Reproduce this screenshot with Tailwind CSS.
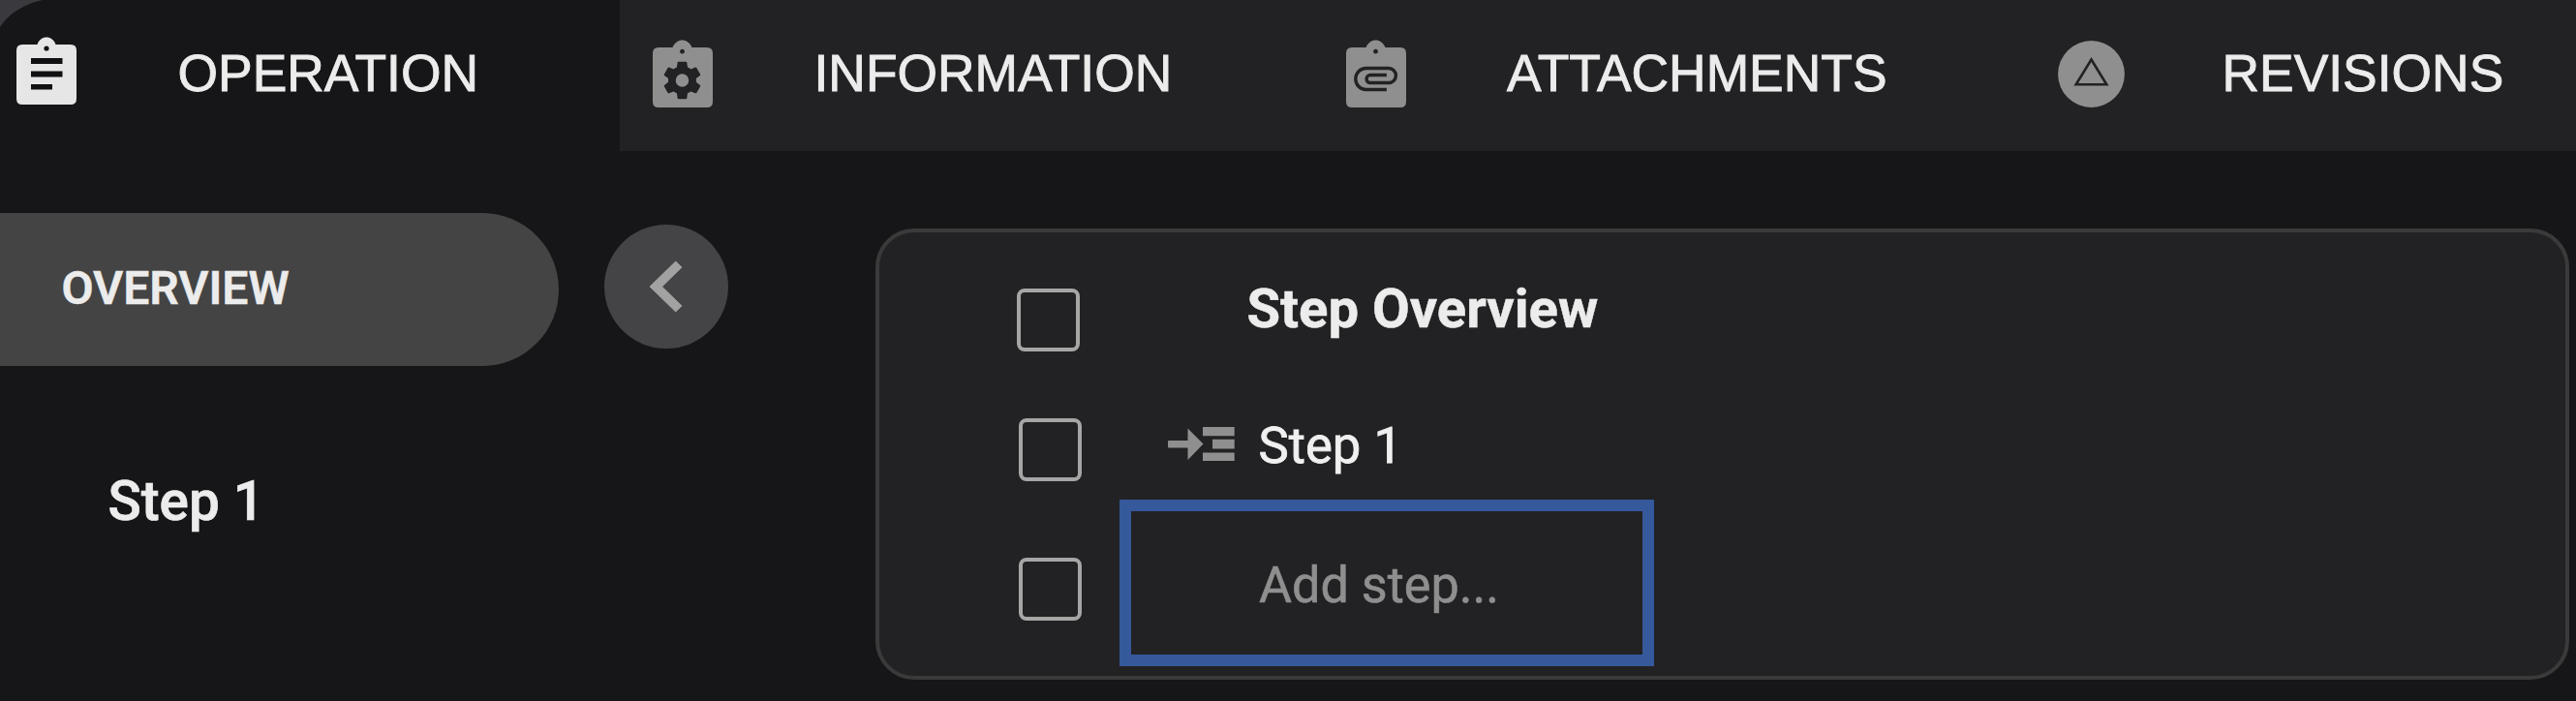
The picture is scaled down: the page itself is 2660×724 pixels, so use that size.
<!DOCTYPE html>
<html lang="en">
<head>
<meta charset="utf-8">
<title>Operation</title>
<script src="https://cdn.jsdelivr.net/npm/@tailwindcss/browser@4"></script>
</head>
<body class="bg-[#161618]">
<div class="relative flex h-[724px] w-[2660px] flex-col overflow-hidden bg-[#161618] font-[Roboto,sans-serif] text-[#ececec]">
  <!-- Rounded window corner -->
  <svg class="absolute left-0 top-0 h-7 w-[46px]" viewBox="0 0 46 28"><path d="M0 0H44C25 4 9 14 0 28Z" fill="#3a393e"/></svg>

  <nav class="flex h-[156px] shrink-0 font-['Liberation_Sans',Arial,sans-serif] text-[53.4px] leading-none whitespace-nowrap [-webkit-text-stroke:0.9px_#ececec]">
    <div class="flex w-[640px] items-start pl-[17px]">
      <svg class="mt-[38px] h-[70px] w-[62px] shrink-0" viewBox="0 0 62 70">
        <path d="M6 8H21.5C23 3 27 .5 31 .5S39 3 40.5 8H56Q62 8 62 14V64Q62 70 56 70H6Q0 70 0 64V14Q0 8 6 8Z" fill="#e6e6e6"/>
        <path d="M15 22H47.5V28H15ZM15 35.5H47.5V41.5H15ZM15 49H37V54.5H15Z" fill="#111113"/>
        <circle cx="31" cy="12" r="2.6" fill="#111113"/>
      </svg>
      <span class="mt-[49px] ml-[104.5px]">OPERATION</span>
    </div>
    <div class="flex w-[749px] items-start bg-[#222224] pl-[34px]">
      <svg class="mt-[41px] h-[70px] w-[62px] shrink-0" viewBox="0 0 62 70">
        <path d="M6 8H20.5C22.5 3 26.5 .5 30.5 .5S38.5 3 40.5 8H56Q62 8 62 14V64Q62 70 56 70H6Q0 70 0 64V14Q0 8 6 8Z" fill="#8f8f8f"/>
        <circle cx="30.5" cy="12.2" r="2.4" fill="#222224"/>
        <path transform="translate(7.3 18.8) scale(1.93)" fill="#222224" d="M12,15.5A3.5,3.5 0 0,1 8.5,12A3.5,3.5 0 0,1 12,8.5A3.5,3.5 0 0,1 15.5,12A3.5,3.5 0 0,1 12,15.5M19.43,12.97C19.47,12.65 19.5,12.33 19.5,12C19.5,11.67 19.47,11.34 19.43,11L21.54,9.37C21.73,9.22 21.78,8.95 21.66,8.73L19.66,5.27C19.54,5.05 19.27,4.96 19.05,5.05L16.56,6.05C16.04,5.66 15.5,5.32 14.87,5.07L14.5,2.42C14.46,2.18 14.25,2 14,2H10C9.75,2 9.54,2.18 9.5,2.42L9.13,5.07C8.5,5.32 7.96,5.66 7.44,6.05L4.95,5.05C4.73,4.96 4.46,5.05 4.34,5.27L2.34,8.73C2.21,8.95 2.27,9.22 2.46,9.37L4.57,11C4.53,11.34 4.5,11.67 4.5,12C4.5,12.33 4.53,12.65 4.57,12.97L2.46,14.63C2.27,14.78 2.21,15.05 2.34,15.27L4.34,18.73C4.46,18.95 4.73,19.03 4.95,18.95L7.44,17.94C7.96,18.34 8.5,18.68 9.13,18.93L9.5,21.58C9.54,21.82 9.75,22 10,22H14C14.25,22 14.46,21.82 14.5,21.58L14.87,18.93C15.5,18.67 16.04,18.34 16.56,17.94L19.05,18.95C19.27,19.03 19.54,18.95 19.66,18.73L21.66,15.27C21.78,15.05 21.73,14.78 21.54,14.63L19.43,12.97Z"/>
      </svg>
      <span class="mt-[49px] ml-[104.5px]">INFORMATION</span>
    </div>
    <div class="flex w-[735px] items-start bg-[#222224]">
      <svg class="mt-[41px] ml-px h-[70px] w-[62px] shrink-0" viewBox="0 0 62 70">
        <path d="M6 8H20.5C22.5 3 26.5 .5 30.5 .5S38.5 3 40.5 8H56Q62 8 62 14V64Q62 70 56 70H6Q0 70 0 64V14Q0 8 6 8Z" fill="#8f8f8f"/>
        <circle cx="30.5" cy="12.2" r="2.4" fill="#222224"/>
        <path transform="translate(3.6 11.4) scale(2.25 2.33)" fill="#222224" d="M7.5,18A5.5,5.5 0 0,1 2,12.5A5.5,5.5 0 0,1 7.5,7H18A4,4 0 0,1 22,11A4,4 0 0,1 18,15H9.5A2.5,2.5 0 0,1 7,12.5A2.5,2.5 0 0,1 9.5,10H17V11.5H9.5A1,1 0 0,0 8.5,12.5A1,1 0 0,0 9.5,13.5H18A2.5,2.5 0 0,0 20.5,11A2.5,2.5 0 0,0 18,8.5H7.5A4,4 0 0,0 3.5,12.5A4,4 0 0,0 7.5,16.5H17V18H7.5Z"/>
      </svg>
      <span class="mt-[49px] ml-[104px]">ATTACHMENTS</span>
    </div>
    <div class="flex flex-1 items-start bg-[#222224]">
      <svg class="mt-[41.5px] ml-[0.5px] h-[69px] w-[69px] shrink-0" viewBox="0 0 69 69">
        <circle cx="34.5" cy="34.5" r="34.4" fill="#8f8f8f"/>
        <path d="M34.5 19.5L50.3 45.3H18.7Z" fill="none" stroke="#222224" stroke-width="2.6"/>
      </svg>
      <span class="mt-[49px] ml-[101px]">REVISIONS</span>
    </div>
  </nav>

  <div class="flex flex-1">
    <aside class="flex w-[904px] shrink-0 flex-col pt-16">
      <div class="flex items-start">
        <div class="h-[158px] w-[576.5px] rounded-r-full bg-[#444444] pt-[53.5px] pl-[63.5px] text-[48px] leading-none font-semibold [-webkit-text-stroke:0.5px_#ececec]">OVERVIEW</div>
        <button class="mt-3 ml-[47.5px] flex size-[128px] items-center justify-center rounded-full bg-[#444446]">
          <svg class="-ml-0.5 h-[52px] w-[33px] overflow-visible" viewBox="8 6 7.41 12" preserveAspectRatio="none"><path d="M15.41 7.41L14 6l-6 6 6 6 1.41-1.41L10.83 12z" fill="#a2a2a2" stroke="#a2a2a2" stroke-width=".2"/></svg>
        </button>
      </div>
      <div class="mt-[111.7px] pl-[111.5px] text-[56.6px] leading-none font-medium [-webkit-text-stroke:0.7px_#ececec]">Step 1</div>
    </aside>

    <main class="mt-20 h-[466px] w-[1749px] rounded-[40px] border-4 border-[#3a3a3b] bg-[#222224] leading-none whitespace-nowrap">
      <div class="flex h-[190px] items-start pl-[142px]">
        <div class="mt-[57.5px] size-[65px] rounded-lg border-4 border-[#a6a6a6]"></div>
        <h1 class="mt-[51px] ml-[172.5px] text-[56.2px] leading-none font-bold [-webkit-text-stroke:0.5px_#ececec]">Step Overview</h1>
      </div>
      <div class="flex h-[86px] items-start pl-[144px]">
        <div class="mt-[2px] size-[65px] rounded-lg border-4 border-[#a6a6a6]"></div>
        <svg class="mt-[11px] ml-[89px] h-[35px] w-[69px]" viewBox="0 0 69 35"><path d="M1 14H20.5V1.5L36.5 17.5 20.5 34V21.5H1Q0 21.5 0 20.5V15Q0 14 1 14ZM36 0H68.7V9.2H36ZM46 12.8H68.7V22.5H46ZM36 26.5H68.7V35.5H36Z" fill="#8f8f8f"/></svg>
        <span class="mt-[4.2px] ml-[24.5px] text-[52.6px] leading-none text-[#f0f0f0] [-webkit-text-stroke:0.8px_#f0f0f0]">Step 1</span>
      </div>
      <div class="flex items-start pl-[144px]">
        <div class="mt-[59.5px] size-[65px] rounded-lg border-4 border-[#a6a6a6]"></div>
        <div class="ml-[39px] h-[172px] w-[552px] border-12 border-[#35599b] pt-[51.4px] pl-[132px] text-[52.2px] leading-none text-[#8f8f8f] [-webkit-text-stroke:0.6px_#8f8f8f]">Add step...</div>
      </div>
    </main>
  </div>
</div>
</body>
</html>
